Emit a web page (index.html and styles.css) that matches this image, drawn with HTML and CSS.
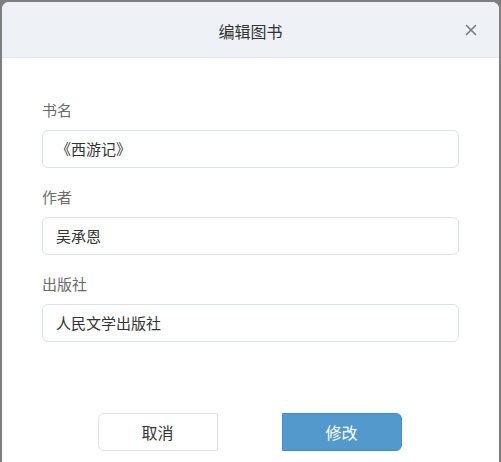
FILE: index.html
```html
<!DOCTYPE html>
<html lang="zh">
<head>
<meta charset="utf-8">
<link rel="stylesheet" href="styles.css">
</head>
<body>
<div class="modal">
  <div class="modal-header">
    <span class="modal-title">编辑图书</span>
    <span class="modal-close">
      <svg width="12" height="12" viewBox="0 0 12 12"><path d="M1.5 1.5 L10.5 10.5 M10.5 1.5 L1.5 10.5" stroke="#7a7a7a" stroke-width="1.6" fill="none" stroke-linecap="round"/></svg>
    </span>
  </div>
  <div class="modal-body">
    <div class="field">
      <div class="field-label">书名</div>
      <div class="field-input">《西游记》</div>
    </div>
    <div class="field">
      <div class="field-label">作者</div>
      <div class="field-input">吴承恩</div>
    </div>
    <div class="field">
      <div class="field-label">出版社</div>
      <div class="field-input">人民文学出版社</div>
    </div>
  </div>
  <div class="modal-footer">
    <button class="btn btn-cancel">取消</button>
    <button class="btn btn-primary">修改</button>
  </div>
</div>
</body>
</html>
```
FILE: styles.css
```css
html, body {
  margin: 0;
  padding: 0;
  height: 100%;
  overflow: hidden;
}
body {
  background: #7f7f7f;
  font-family: "Noto Sans CJK SC", "Noto Sans", sans-serif;
  padding-top: 2px;
  padding-left: 2px;
}
.modal {
  width: 497px;
  height: 480px;
  background: #ffffff;
  border-radius: 7px 7px 0 0;
  overflow: hidden;
}
.modal-header {
  height: 55px;
  background: #eef2f7;
  border-bottom: 1px solid #e3e8ef;
  display: flex;
  align-items: center;
  justify-content: center;
  position: relative;
}
.modal-title {
  font-size: 16px;
  color: #333;
  margin-top: 2px;
}
.modal-close {
  position: absolute;
  right: 22px;
  top: 22px;
  width: 12px;
  height: 12px;
  display: flex;
}
.modal-body {
  padding: 42px 40px 0 40px;
}
.field {
  margin-bottom: 19px;
}
.field:last-child {
  margin-bottom: 0;
}
.field-label {
  font-size: 15px;
  line-height: 20px;
  color: #6b6b6b;
  margin-bottom: 10px;
}
.field-input {
  height: 36px;
  border: 1px solid #dde1e8;
  border-radius: 6px;
  padding: 0 13px;
  font-size: 15px;
  line-height: 36px;
  color: #333;
}
.modal-footer {
  display: flex;
  justify-content: center;
  gap: 64px;
  margin-top: 71px;
  padding-right: 2px;
}
.btn {
  width: 120px;
  height: 38px;
  font-family: inherit;
  font-size: 16px;
  padding: 0;
  cursor: pointer;
}
.btn-cancel {
  background: #fff;
  border: 1px solid #e2e2e2;
  border-radius: 6px 0 0 6px;
  color: #333;
}
.btn-primary {
  background: #5499cb;
  border: 1px solid #3d8ae6;
  border-radius: 0 6px 6px 0;
  color: #fff;
}
```
